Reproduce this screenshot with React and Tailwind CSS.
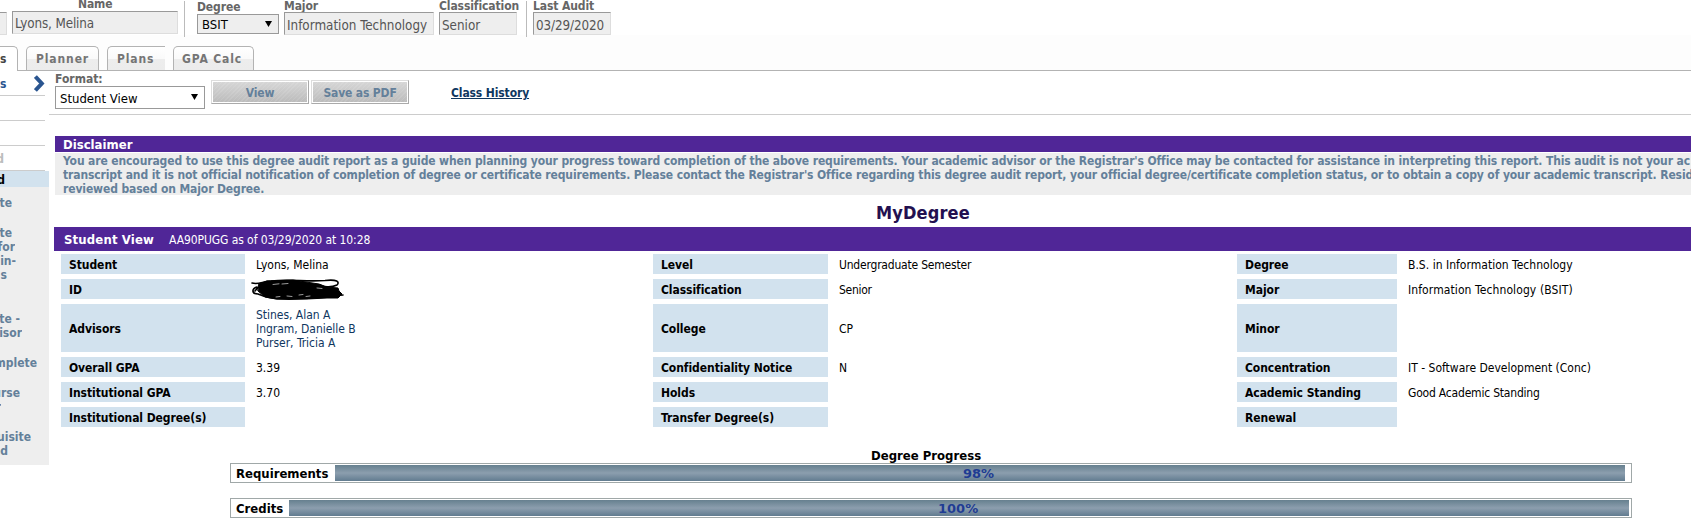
import React from 'react';

const FONT = "font-['DejaVu_Sans_Condensed','DejaVu_Sans',sans-serif]";

const sidebarLines = [
  { text: 'te', w: 'w-[12px]', gap: 'mt-[9px]' },
  { text: 'te', w: 'w-[12px]', gap: 'mt-4' },
  { text: 'for', w: 'w-[15px]', gap: '' },
  { text: 'in-', w: 'w-[16px]', gap: '' },
  { text: 's', w: 'w-[7px]', gap: '' },
  { text: 'te -', w: 'w-5', gap: 'mt-[30px]' },
  { text: 'isor', w: 'w-[22px]', gap: '' },
  { text: 'mplete', w: 'w-[37px]', gap: 'mt-4' },
  { text: 'urse', w: 'w-[20px]', gap: 'mt-4' },
  { text: 'r', w: 'w-[1px]', gap: '' },
  { text: 'uisite', w: 'w-[31px]', gap: 'mt-4' },
  { text: 'ed', w: 'w-[8px]', gap: '' },
];

const rows = [
  [
    { label: 'Student', value: 'Lyons, Melina' },
    { label: 'Level', value: 'Undergraduate Semester', track: 'tracking-[-0.2px]' },
    { label: 'Degree', value: 'B.S. in Information Technology', track: 'tracking-[0.02px]' },
  ],
  [
    { label: 'ID', redacted: true },
    { label: 'Classification', value: 'Senior', track: 'tracking-[-0.3px]' },
    { label: 'Major', value: 'Information Technology (BSIT)', track: 'tracking-[0.1px]' },
  ],
  [
    { label: 'Advisors', links: ['Stines, Alan A', 'Ingram, Danielle B', 'Purser, Tricia A'], track: 'tracking-[-0.03px]' },
    { label: 'College', value: 'CP' },
    { label: 'Minor' },
  ],
  [
    { label: 'Overall GPA', value: '3.39' },
    { label: 'Confidentiality Notice', value: 'N' },
    { label: 'Concentration', value: 'IT - Software Development (Conc)' },
  ],
  [
    { label: 'Institutional GPA', value: '3.70' },
    { label: 'Holds' },
    { label: 'Academic Standing', value: 'Good Academic Standing', track: 'tracking-[-0.2px]' },
  ],
  [{ label: 'Institutional Degree(s)' }, { label: 'Transfer Degree(s)' }, { label: 'Renewal' }],
];

function Field({ label, value, className, labelClass = '', inputClass = '' }) {
  return (
    <div className={`flex shrink-0 flex-col ${className}`}>
      <div className={`h-[14px] text-xs leading-[14px] font-bold tracking-[-0.1px] text-[#666] ${labelClass}`}>{label}</div>
      <div className={`h-[23px] border border-t-[#999] border-l-[#999] border-r-[#ddd] border-b-[#ddd] bg-[#eee] pl-[2px] text-[13.33px] leading-[23px] text-[#555] ${inputClass}`}>
        {value}
      </div>
    </div>
  );
}

function Divider() {
  return <div className="mt-px h-9 w-px shrink-0 bg-[#bbb]" />;
}

function Caret({ className = '' }) {
  return (
    <svg className={className} width="7" height="6" viewBox="0 0 7 6">
      <path d="M0 0h7L3.5 6z" fill="#000" />
    </svg>
  );
}

function Tab({ children, className }) {
  return (
    <div className={`h-6 shrink-0 rounded-t-[5px] border border-b-0 border-[#b3b3b3] bg-[linear-gradient(#fff_0%,#fafafa_50%,#ededed_52%,#ececec_100%)] text-xs leading-6 font-bold tracking-[0.88px] text-[#757575] ${className}`}>
      {children}
    </div>
  );
}

function Button({ children, className = '' }) {
  return (
    <div className={`h-6 w-[98px] border border-t-[#ddd] border-l-[#ddd] border-r-[#aaa] border-b-[#aaa] bg-white p-px ${className}`}>
      <div className="h-full bg-[repeating-linear-gradient(135deg,#ffffff18_0px,#ffffff18_1px,transparent_1px,transparent_3px),linear-gradient(#d6d6d6,#bcbcbc)] pt-px text-center text-xs leading-[21px] font-bold tracking-[-0.15px] text-[#64809a]">{children}</div>
    </div>
  );
}

function Scribble() {
  return (
    <svg className="-ml-[5px] max-w-none shrink-0" width="94" height="22" viewBox="0 0 94 22" fill="none" stroke="#000" strokeLinecap="round" strokeLinejoin="round">
      <path d="M8 5 16 2 42 1 68 5 76 8 87 9 88 12 91 15 87 19 76 19 56 20 26 20 14 18 7 12Z" fill="#000" strokeWidth="1" />
      <path d="M1 4C8 6 12 2 20 2C40 0 55 3 74 1.5C86 0 89 3 86 6C80 9 72 8 68 6M6 8C0 10 1 15 7 15C14 18 22 20 32 20C50 21 70 18 92 16M4 12C9 5 18 4 28 3" strokeWidth="1.6" />
      <path d="M71 5C75 3 80 2.600 84 3.400C83 5.500 78 6.500 73 6.200Z" fill="#fff" stroke="none" />
      <path d="M22 5.500 28 4.800M31 5 37 4.500M25 18 29 17.500M36 17 41 17.500M55 17.500 59 17M66 9 71 9.500M48 16 52 15.500" stroke="#ddd" strokeWidth=".7" />
    </svg>
  );
}

function Cell({ item, col }) {
  const label = ['w-[184px]', 'w-[175px]', 'w-[160px]'][col];
  const cell = ['w-[592px]', 'w-[584px]', 'w-[454px]'][col];
  return (
    <div className={`flex shrink-0 ${cell}`}>
      <div className={`flex shrink-0 items-center bg-[#d2e2ee] pt-[2px] pl-2 font-bold tracking-[-0.06px] ${label}`}>{item.label}</div>
      <div className={`flex flex-col justify-center pt-[2px] pl-[11px] whitespace-nowrap ${item.track ?? ''}`}>
        {item.value && <div>{item.value}</div>}
        {item.redacted && <Scribble />}
        {item.links?.map((name) => (
          <a key={name} className="text-[#10375f]">{name}</a>
        ))}
      </div>
    </div>
  );
}

function ProgressBar({ label, percent, labelWidth, fillWidth, pad }) {
  return (
    <div className="ml-[181px] flex h-5 w-[1402px] border border-[#a0a8a8] bg-white py-px">
      <div className={`shrink-0 pl-[5px] text-[13px] leading-[17px] font-bold ${labelWidth}`}>{label}</div>
      <div className={`shrink-0 bg-linear-to-b from-[#66808f] via-[#8c9eae] to-[#627c90] font-['DejaVu_Sans',sans-serif] text-[13px] leading-[17px] font-bold text-[#1f3c93] ${fillWidth} ${pad}`}>{percent}</div>
    </div>
  );
}

export default function App() {
  return (
    <div className={`h-[531px] w-[1691px] overflow-hidden bg-white text-xs leading-[14px] text-black ${FONT}`}>
      <header className="flex h-[35px] items-start">
        <div className="mt-3 h-[23px] w-[7px] shrink-0 border border-l-0 border-t-[#999] border-r-[#ddd] border-b-[#ddd] bg-[#eee]" />
        <Field label="Name" value="Lyons, Melina" className="-mt-[3px] ml-[5px] mr-[6px] w-[166px]" labelClass="pl-[66px]" inputClass="tracking-[-0.13px]" />
        <Divider />
        <div className="ml-3 w-[82px] shrink-0">
          <div className="h-[14px] font-bold tracking-[-0.1px] text-[#666]">Degree</div>
          <div className="flex h-5 items-center justify-between border border-[#999] bg-[#eee] pr-[6px] pl-1 text-[13px]">
            <span className="pt-[2px]">BSIT</span>
            <Caret />
          </div>
        </div>
        <Field label="Major" value="Information Technology" className="-mt-px ml-[5px] w-[150px]" inputClass="mt-[-1px] pt-px" />
        <Field label="Classification" value="Senior" className="-mt-px ml-[5px] w-[78px]" labelClass="whitespace-nowrap" inputClass="mt-[-1px] pt-px" />
        <div className="w-[9px] shrink-0" />
        <Divider />
        <Field label="Last Audit" value="03/29/2020" className="-mt-px ml-[6px] w-[78px]" inputClass="mt-[-1px] pt-px tracking-[-0.1px]" />
      </header>

      <nav className="flex h-9 items-end bg-[#fdfdfd]">
        <div className="h-[25px] w-[18px] shrink-0 rounded-tr-[5px] border-t border-r border-[#b3b3b3] bg-white text-xs leading-[24px] font-bold text-[#444]">s</div>
        <div className="flex h-[25px] flex-1 border-b border-[#b3b3b3] pl-2">
          <Tab className="w-[73px] pl-[9px]">Planner</Tab>
          <Tab className="ml-2 w-[58px] rounded-tr-none border-r-0 pl-[9px]">Plans</Tab>
          <Tab className="ml-2 w-[81px] pl-[8px]">GPA Calc</Tab>
        </div>
      </nav>

      <div className="flex">
        <aside className="w-[49px] shrink-0 font-bold">
          <div className="flex h-[25px] w-[45px] items-start justify-between border-b border-[#ccc] pt-[4px]">
            <span className="mt-[2px] text-[#2a5590]">s</span>
            <svg width="11" height="17" viewBox="0 0 11 17" fill="none" stroke="#2a5590" strokeWidth="4">
              <path d="M1.400 1.500 7.800 8.500 1.400 15.500" />
            </svg>
          </div>
          <div className="h-[25px] w-[45px] border-b border-[#ccc]" />
          <div className="h-[25px] w-[45px] border-b border-[#ccc]" />
          <div className="flex h-[25px] w-[45px] border-b border-[#ccc] pt-[6px] text-[#bbb]">
            <span className="flex w-1 justify-end">d</span>
          </div>
          <div className="flex h-4 bg-[#d2e2ee] pt-px leading-4">
            <span className="flex w-[5px] justify-end">d</span>
          </div>
          <div className="h-[278px] overflow-hidden bg-[#eee] text-[#64809a]">
            {sidebarLines.map((l, i) => (
              <div key={i} className={`flex h-[14px] justify-end overflow-hidden whitespace-nowrap ${l.w} ${l.gap}`}>
                <span>{l.text}</span>
              </div>
            ))}
          </div>
        </aside>

        <main className="w-[1642px] shrink-0 overflow-hidden">
          <div className="flex h-11 items-start border-b border-[#ccc] pl-[6px]">
            <div className="w-[150px] pt-px">
              <div className="font-bold text-[#666]">Format:</div>
              <div className="flex h-[23px] items-center justify-between border border-[#999] bg-white pr-[6px] pl-1 text-[13px]">
                <span className="pt-[2px]">Student View</span>
                <Caret className="mb-px" />
              </div>
            </div>
            <Button className="mt-[9px] ml-[6px]">View</Button>
            <Button className="mt-[9px] ml-[2px]">Save as PDF</Button>
            <a className="mt-[15px] ml-[42px] font-bold tracking-[-0.12px] text-[#10375f] underline">Class History</a>
          </div>

          <section className="mt-[21px] ml-[6px]">
            <div className="h-4 bg-[#502697] pt-px pl-2 text-[13px] leading-4 font-bold text-white">Disclaimer</div>
            <div className="mt-px h-[42px] bg-[#eee] pt-px pl-2 font-bold tracking-[-0.119px] whitespace-nowrap text-[#64809a]">
              <div>You are encouraged to use this degree audit report as a guide when planning your progress toward completion of the above requirements. Your academic advisor or the Registrar's Office may be contacted for assistance in interpreting this report. This audit is not your ac</div>
              <div>transcript and it is not official notification of completion of degree or certificate requirements. Please contact the Registrar's Office regarding this degree audit report, your official degree/certificate completion status, or to obtain a copy of your academic transcript. Resid</div>
              <div>reviewed based on Major Degree.</div>
            </div>
          </section>

          <h1 className="flex h-8 items-center pt-[3px] pl-[827px] text-lg leading-none font-bold tracking-[0.15px] text-[#231050]">MyDegree</h1>

          <section className="ml-[5px]">
            <div className="flex h-6 items-center bg-[#502697] pt-[2px] pl-[10px] text-white">
              <span className="w-[105px] text-[13px] font-bold tracking-[0.15px]">Student View</span>
              <span className="tracking-[-0.08px]">AA90PUGG as of 03/29/2020 at 10:28</span>
            </div>
            <div className="flex flex-col gap-[5px] pt-[3px] pl-[7px]">
              {rows.map((row, i) => (
                <div key={i} className={`flex ${i === 2 ? 'h-12' : 'h-5'}`}>
                  {row.map((item, col) => (
                    <Cell key={col} item={item} col={col} />
                  ))}
                </div>
              ))}
            </div>
          </section>

          <section className="pt-[21px]">
            <h2 className="h-[15px] pl-[822px] text-[13px] leading-[15px] font-bold">Degree Progress</h2>
            <ProgressBar label="Requirements" percent="98%" labelWidth="w-[104px]" fillWidth="w-[1290px]" pad="pl-[628px]" />
            <div className="h-[15px]" />
            <ProgressBar label="Credits" percent="100%" labelWidth="w-[58px]" fillWidth="w-[1340px]" pad="pl-[649px]" />
          </section>
        </main>
      </div>
    </div>
  );
}
